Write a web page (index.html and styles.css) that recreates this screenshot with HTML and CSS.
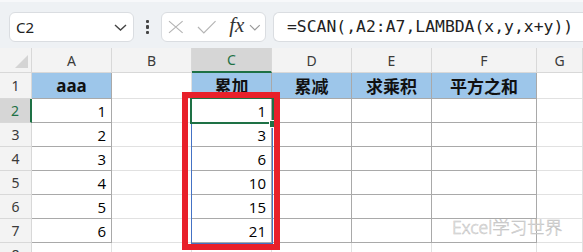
FILE: index.html
```html
<!DOCTYPE html>
<html lang="en">
<head>
    <meta charset="UTF-8">
    <title>SCAN 累加</title>
    <link rel="stylesheet" href="styles.css">
</head>
<body>
    <div class="toolbar">
        <div class="namebox">
            <span>C2</span>
            <svg class="chev" width="13" height="7" viewBox="0 0 13 7"><polyline points="1,1 6.5,6 12,1" fill="none" stroke="#444" stroke-width="1.4"/></svg>
        </div>
        <div class="dots"><i></i><i></i><i></i></div>
        <div class="fxbox">
            <svg width="16" height="14" viewBox="0 0 16 14"><path d="M1 1 L15 13 M15 1 L1 13" stroke="#b4b4b4" stroke-width="1.2" fill="none"/></svg>
            <svg class="check" width="20" height="14" viewBox="0 0 20 14"><polyline points="1,7 7,13 19,1" stroke="#b4b4b4" stroke-width="1.2" fill="none"/></svg>
            <span class="fx">fx</span>
            <svg width="12" height="7" viewBox="0 0 12 7"><polyline points="1,1 6,6 11,1" fill="none" stroke="#999" stroke-width="1.2"/></svg>
        </div>
        <div class="formula">=SCAN(,A2:A7,LAMBDA(x,y,x+y))</div>
    </div>

    <div class="sheet">
        <!-- column headers -->
        <div class="hd corner"><span class="tri"></span></div>
        <div class="hd">A</div>
        <div class="hd">B</div>
        <div class="hd cur-col">C</div>
        <div class="hd">D</div>
        <div class="hd">E</div>
        <div class="hd">F</div>
        <div class="hd">G</div>

        <!-- row 1 -->
        <div class="rh">1</div>
        <div class="c t title">aaa</div>
        <div class="c"></div>
        <div class="c t title">累加</div>
        <div class="c t title">累减</div>
        <div class="c t title">求乘积</div>
        <div class="c t title">平方之和</div>
        <div class="c"></div>

        <!-- row 2 -->
        <div class="rh cur-row">2</div>
        <div class="c t num">1</div>
        <div class="c"></div>
        <div class="c t num">1</div>
        <div class="c t"></div>
        <div class="c t"></div>
        <div class="c t"></div>
        <div class="c"></div>

        <!-- row 3 -->
        <div class="rh">3</div>
        <div class="c t num">2</div>
        <div class="c"></div>
        <div class="c t num">3</div>
        <div class="c t"></div>
        <div class="c t"></div>
        <div class="c t"></div>
        <div class="c"></div>

        <!-- row 4 -->
        <div class="rh">4</div>
        <div class="c t num">3</div>
        <div class="c"></div>
        <div class="c t num">6</div>
        <div class="c t"></div>
        <div class="c t"></div>
        <div class="c t"></div>
        <div class="c"></div>

        <!-- row 5 -->
        <div class="rh">5</div>
        <div class="c t num">4</div>
        <div class="c"></div>
        <div class="c t num">10</div>
        <div class="c t"></div>
        <div class="c t"></div>
        <div class="c t"></div>
        <div class="c"></div>

        <!-- row 6 -->
        <div class="rh">6</div>
        <div class="c t num">5</div>
        <div class="c"></div>
        <div class="c t num">15</div>
        <div class="c t"></div>
        <div class="c t"></div>
        <div class="c t"></div>
        <div class="c"></div>

        <!-- row 7 -->
        <div class="rh">7</div>
        <div class="c t num">6</div>
        <div class="c"></div>
        <div class="c t num">21</div>
        <div class="c t"></div>
        <div class="c t"></div>
        <div class="c t"></div>
        <div class="c"></div>

        <!-- row 8 -->
        <div class="rh">8</div>
        <div class="c"></div>
        <div class="c"></div>
        <div class="c"></div>
        <div class="c"></div>
        <div class="c"></div>
        <div class="c"></div>
        <div class="c"></div>
    </div>

    <!-- selection and annotation overlays -->
    <div class="range"></div>
    <div class="active"></div>
    <div class="handle"></div>
    <div class="redbox"></div>
    <div class="watermark">Excel学习世界</div>
</body>
</html>
```

FILE: styles.css
```css
body {
    margin: 0;
    width: 583px;
    height: 252px;
    overflow: hidden;
    position: relative;
    background: #ffffff;
    font-family: "Noto Sans", "Noto Sans CJK SC", sans-serif;
}

/* formula bar */
.toolbar {
    height: 48px;
    box-sizing: border-box;
    padding: 10px 0 0 9px;
    display: flex;
    align-items: flex-start;
    background: #eef1f4;
    border-top: 2px solid #f7f8fa;
}

.namebox {
    width: 125px;
    height: 30px;
    box-sizing: border-box;
    background: #fff;
    border: 1px solid #dadde1;
    border-radius: 6px;
    display: flex;
    align-items: center;
    justify-content: space-between;
    padding: 0 6px 0 6px;
    font-size: 15px;
    color: #222;
}

.dots {
    width: 27px;
    height: 30px;
    display: flex;
    flex-direction: column;
    align-items: center;
    justify-content: center;
    gap: 2px;
}

.dots i {
    width: 3.5px;
    height: 3.5px;
    background: #444;
    border-radius: 1px;
}

.fxbox {
    width: 105px;
    height: 30px;
    box-sizing: border-box;
    background: #fff;
    border: 1px solid #dadde1;
    border-radius: 6px;
    display: flex;
    align-items: center;
    padding: 0 4px 0 6px;
}

.fxbox .check {
    margin-left: 13px;
}

.fx {
    font-family: "Liberation Serif", serif;
    font-style: italic;
    font-size: 21px;
    color: #333;
    margin: -3px 5px 0 13px;
}

.formula {
    flex: 1;
    height: 30px;
    margin-left: 7px;
    box-sizing: border-box;
    background: #fff;
    border: 1px solid #dadde1;
    border-right: none;
    border-radius: 6px 0 0 6px;
    padding-left: 13px;
    font-family: "DejaVu Sans Mono", monospace;
    font-size: 16.4px;
    line-height: 28px;
    color: #222;
    white-space: nowrap;
}

/* grid */
.sheet {
    display: grid;
    grid-template-columns: 32px 80px 80px 80px 80px 80px 105px 46px;
    grid-template-rows: 25px 26px repeat(7, 24px);
}

.sheet > div {
    box-sizing: border-box;
    border-right: 1px solid #e1e1e1;
    border-bottom: 1px solid #e1e1e1;
}

.hd {
    background: #f3f3f3;
    color: #3a3a3a;
    font-size: 14px;
    display: flex;
    align-items: center;
    justify-content: center;
    border-color: #d8d8d8 !important;
}

.corner {
    position: relative;
}

.tri {
    position: absolute;
    right: 3px;
    bottom: 4px;
    width: 0;
    height: 0;
    border-left: 13px solid transparent;
    border-bottom: 13px solid #d4d4d4;
}

.cur-col {
    background: #d6d6d6;
    color: #1e7145;
    border-bottom: 2px solid #1e7145 !important;
}

.rh {
    background: #f3f3f3;
    color: #3a3a3a;
    font-size: 14px;
    display: flex;
    align-items: center;
    justify-content: center;
    border-color: #d8d8d8 !important;
}

.cur-row {
    background: #d6d6d6;
    color: #1e7145;
    border-right: 2px solid #1e7145 !important;
}

.c {
    font-size: 15px;
    color: #000;
}

.t {
    border-color: #a9a9a9 !important;
}

.title {
    background: #9dc6ea;
    font-weight: bold;
    font-size: 17px;
    display: flex;
    align-items: center;
    justify-content: center;
    color: #111;
}

.num {
    display: flex;
    align-items: center;
    justify-content: flex-end;
    padding-right: 5px;
    font-family: "Open Sans", sans-serif;
}

/* overlays */
.range {
    position: absolute;
    left: 191px;
    top: 98px;
    width: 82px;
    height: 146px;
    box-sizing: border-box;
    border: 1px solid #4472c4;
}

.active {
    position: absolute;
    left: 190px;
    top: 97px;
    width: 84px;
    height: 27px;
    box-sizing: border-box;
    border: 2px solid #1e7145;
}

.handle {
    position: absolute;
    left: 269px;
    top: 120px;
    width: 6px;
    height: 6px;
    background: #1e7145;
    border: 1px solid #fff;
}

.redbox {
    position: absolute;
    left: 182px;
    top: 92px;
    width: 98px;
    height: 158px;
    box-sizing: border-box;
    border: 6px solid #e8202a;
}

.watermark {
    position: absolute;
    left: 452px;
    top: 214px;
    font-family: "Noto Sans", "Noto Sans CJK SC", sans-serif;
    font-size: 17.5px;
    font-weight: 300;
    color: #f2f2f2;
    -webkit-text-stroke: 0.5px #c2c2c2;
    white-space: nowrap;
}
```
